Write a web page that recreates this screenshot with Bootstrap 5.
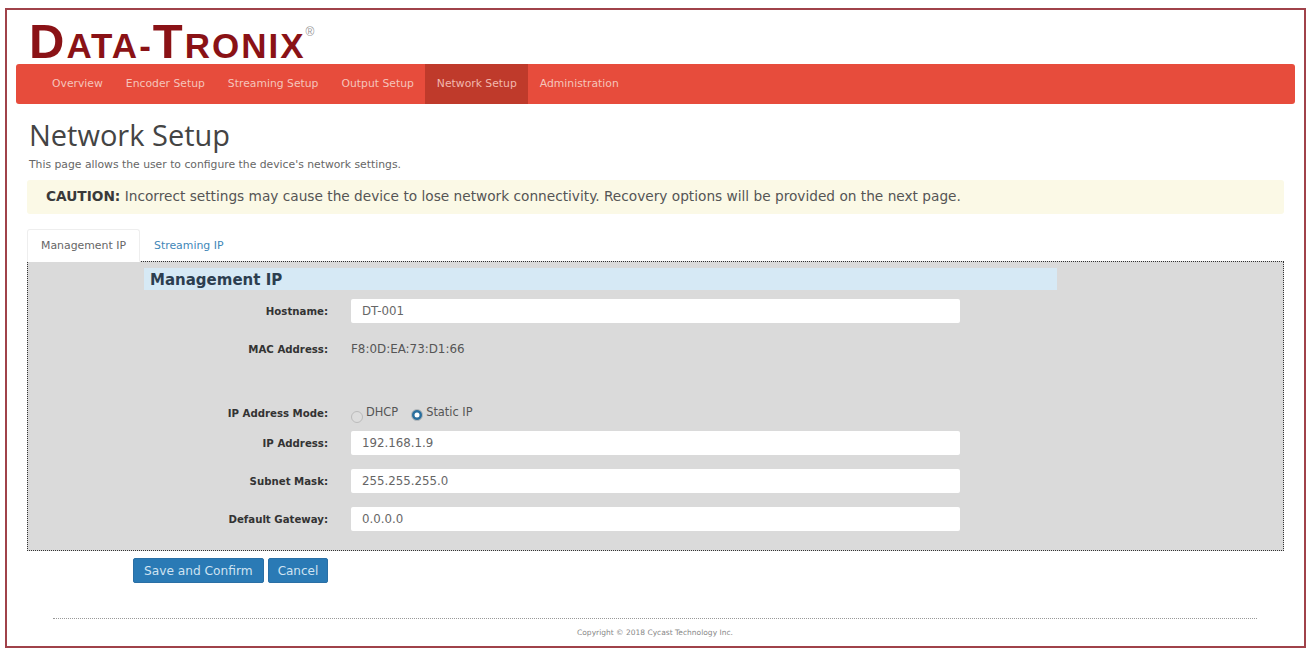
<!DOCTYPE html>
<html>
<head>
<title>Network Setup</title>
<link href="https://cdn.jsdelivr.net/npm/bootstrap@5.3.2/dist/css/bootstrap.min.css" rel="stylesheet" />
<script src="https://cdn.jsdelivr.net/npm/bootstrap@5.3.2/dist/js/bootstrap.bundle.min.js"></script>
<style>
  html, body { background: #fff; }
  body { font-family: "DejaVu Sans", sans-serif; color: #555; }
  #frame { width: 1301px; height: 640px; margin: 8px 0 0 5px; border: 2px solid #a0424a; padding: 0 9px; overflow: hidden; }
  #logo { height: 54px; padding: 8px 0 0 13px; font-family: "Liberation Sans", sans-serif; font-weight: 700; font-size: 35px; line-height: 46px; letter-spacing: 2px; color: #8a1216; white-space: nowrap; }
  #logo .big { font-size: 49px; }
  #logo sup { font-size: 12px; font-weight: 400; letter-spacing: 0; color: #999; top: -1.8em; left: 0; }
  #topnav { height: 40px; background: #e74c3c; border-radius: 3px; padding: 0 0 0 24.5px; }
  #topnav .nav-link { height: 40px; line-height: 40px; padding: 0 11.5px; color: #f5c4bb; font-size: 10.8px; }
  #topnav .nav-link.active { background: #bf3a2b; color: #f2b8ae; }
  h1 { font-family: "Open Sans", sans-serif; font-size: 29px; font-weight: 400; color: #444; margin: 16px 0 0 13px; line-height: 30px; }
  #intro { font-size: 10.8px; margin: 8px 0 0 13px; line-height: 14px; color: #666; }
  #caution { margin: 8px 0 0 11px; width: 1257px; height: 34px; line-height: 33px; padding: 0 0 0 19px; border-radius: 3px; background: #fbf9e6; border: 0; color: #555; font-size: 13.7px; white-space: nowrap; }
  #caution strong { color: #3a3a3a; }
  #tabs { margin: 15px 0 0 11px; border: 0; height: 32px; }
  #tabs .nav-link { font-size: 10.9px; height: 33px; line-height: 31px; padding: 0 13px; margin: 0; border-radius: 3px 3px 0 0; border: 1px solid transparent; color: #3f87b8; }
  #tabs .nav-link.active { color: #666; background: #fff; border-color: #eee #eee #fff; }
  #panel { margin-left: 11px; width: 1257px; height: 290px; background: #dadada; border: 1px dotted #333; padding: 6px 0 0 116px; }
  #panel h4 { width: 913px; height: 22px; margin: 0 0 9px; padding-left: 6px; background: #d6e9f5; color: #2c3e50; font: bold 15px/24px "DejaVu Sans", sans-serif; }
  .frow { height: 24px; margin-bottom: 14px; }
  .frow label { width: 184px; margin: 0 23px 0 0; text-align: right; font: bold 10.2px/25px "DejaVu Sans", sans-serif; color: #333; flex: none; }
  .frow .form-control { width: 609px; height: 24px; min-height: 0; padding: 0 11px; border: 0; border-radius: 2px; font-size: 11.8px; color: #666; }
  .frow .val { font-size: 11.9px; line-height: 24px; color: #555; }
  .frow .form-check-input { width: 12px; height: 12px; margin: 8px 0 0; background-color: #ddd; border-color: #bbb; flex: none; }
  .frow .form-check-input:checked { background-color: #2a6f9e; border-color: #bbb; }
  .frow #dhcp { margin-top: 10px; }
  .frow .opt { font-size: 11.4px; line-height: 22px; color: #555; }
  .spacer { margin-bottom: 2px; }
  .tight { margin-bottom: 6px; }
  .radios { gap: 3px; }
  .radios .opt.first { margin-right: 10px; }
  #actions { margin: 7px 0 0 117px; }
  #actions .btn { height: 25px; padding: 0 10px; font-size: 12.2px; line-height: 25px; border-radius: 2px; background: #2a7ab5; border-color: #2a6fa5; color: #cfe3f2; }
  #actions #cancel { padding: 0 9px; font-size: 12px; }
  #foot { margin: 35px 0 0 37px; width: 1204px; border-top: 1px dotted #999; padding-top: 9px; text-align: center; font-size: 7.5px; line-height: 10px; color: #888; }
</style>
</head>
<body>
<div id="frame">
  <div id="logo"><span class="big">D</span>ATA-<span class="big">T</span>RONIX<sup>®</sup></div>
  <nav id="topnav" class="d-flex">
    <ul class="nav">
      <li class="nav-item"><a class="nav-link" href="#">Overview</a></li>
      <li class="nav-item"><a class="nav-link" href="#">Encoder Setup</a></li>
      <li class="nav-item"><a class="nav-link" href="#">Streaming Setup</a></li>
      <li class="nav-item"><a class="nav-link" href="#">Output Setup</a></li>
      <li class="nav-item"><a class="nav-link active" href="#">Network Setup</a></li>
      <li class="nav-item"><a class="nav-link" href="#">Administration</a></li>
    </ul>
  </nav>
  <h1>Network Setup</h1>
  <p id="intro" class="mb-0">This page allows the user to configure the device's network settings.</p>
  <div id="caution" class="alert mb-0"><strong>CAUTION:</strong> Incorrect settings may cause the device to lose network connectivity. Recovery options will be provided on the next page.</div>
  <ul id="tabs" class="nav nav-tabs">
    <li class="nav-item"><a class="nav-link active" href="#">Management IP</a></li>
    <li class="nav-item"><a class="nav-link" href="#">Streaming IP</a></li>
  </ul>
  <div id="panel">
    <h4>Management IP</h4>
    <div class="frow d-flex"><label for="host">Hostname:</label><input id="host" class="form-control" value="DT-001"></div>
    <div class="frow d-flex"><label>MAC Address:</label><span class="val">F8:0D:EA:73:D1:66</span></div>
    <div class="frow spacer"></div>
    <div class="frow tight d-flex"><label>IP Address Mode:</label>
      <div class="radios d-flex">
        <input class="form-check-input" type="radio" name="mode" id="dhcp"><span class="opt first">DHCP</span>
        <input class="form-check-input" type="radio" name="mode" id="static" checked><span class="opt">Static IP</span>
      </div>
    </div>
    <div class="frow d-flex"><label for="ip">IP Address:</label><input id="ip" class="form-control" value="192.168.1.9"></div>
    <div class="frow d-flex"><label for="mask">Subnet Mask:</label><input id="mask" class="form-control" value="255.255.255.0"></div>
    <div class="frow d-flex"><label for="gw">Default Gateway:</label><input id="gw" class="form-control" value="0.0.0.0"></div>
  </div>
  <div id="actions" class="d-flex gap-1">
    <button class="btn btn-primary" type="button">Save and Confirm</button>
    <button id="cancel" class="btn btn-primary" type="button">Cancel</button>
  </div>
  <div id="foot">Copyright © 2018 Cycast Technology Inc.</div>
</div>
</body>
</html>
